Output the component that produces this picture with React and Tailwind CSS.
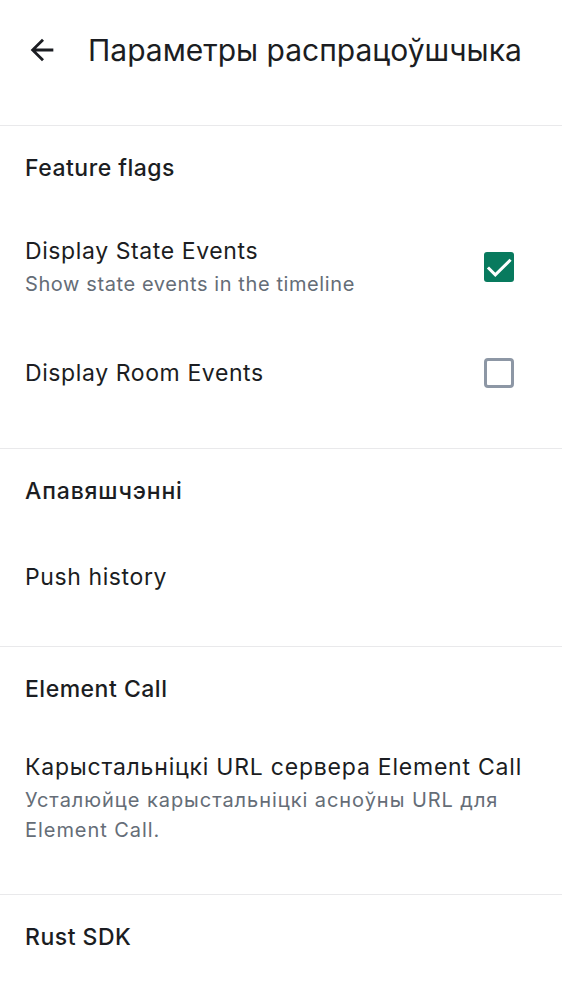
import React from "react";

function Checked() {
  return (
    <div className="w-[30px] h-[30px] rounded-[3px] bg-[#087a5e] flex items-center justify-center">
      <svg width="30" height="30" viewBox="0 0 30 30" fill="none">
        <path d="M5 16.5 L11.3 22.8 L25.5 8.8" stroke="white" strokeWidth="3" strokeLinecap="square" />
      </svg>
    </div>
  );
}

function Unchecked() {
  return <div className="w-[30px] h-[30px] rounded-[4px] border-[3px] border-[#8d97a5] bg-white" />;
}

function SectionHeader({ children, wide }) {
  return (
    <div
      className={
        wide
          ? "pt-[28px] px-[25px] text-[23px] leading-[28px] tracking-[0.85px] font-medium text-[#1b1d22]"
          : "pt-[28px] px-[25px] text-[23px] leading-[28px] tracking-[0.5px] font-medium text-[#1b1d22]"
      }
    >
      {children}
    </div>
  );
}

export default function App() {
  return (
    <div
      className="w-[562px] h-[1000px] bg-white overflow-hidden text-[#1b1d22]"
      style={{ fontFamily: "Inter, Roboto, sans-serif" }}
    >
      <div className="h-[100px] flex items-center px-[25px]">
        <svg width="34" height="34" viewBox="0 0 24 24" fill="#1b1d22">
          <path d="M20 11H7.83l5.59-5.59L12 4l-8 8 8 8 1.41-1.41L7.83 13H20v-2z" />
        </svg>
        <div className="ml-[29px] text-[30px] leading-[36px] text-[#1b1d22]">Параметры распрацоўшчыка</div>
      </div>

      <div className="mt-[25px] border-t border-[#e9e9eb] pb-[59px]">
        <SectionHeader>Feature flags</SectionHeader>
        <div className="mt-[53px] pl-[25px] pr-[48px] flex items-center">
          <div className="flex-1">
            <div className="text-[23px] leading-[32px] tracking-[0.6px]">Display State Events</div>
            <div className="mt-[2px] text-[20px] leading-[30px] tracking-[0.6px] text-[#656d77]">Show state events in the timeline</div>
          </div>
          <Checked />
        </div>
        <div className="mt-[58px] pl-[25px] pr-[48px] flex items-center">
          <div className="flex-1 text-[23px] leading-[32px] tracking-[0.6px]">Display Room Events</div>
          <Unchecked />
        </div>
      </div>

      <div className="border-t border-[#e9e9eb] pb-[53px]">
        <SectionHeader wide>Апавяшчэнні</SectionHeader>
        <div className="mt-[56px] px-[25px] text-[23px] leading-[32px] tracking-[0.6px]">Push history</div>
      </div>

      <div className="border-t border-[#e9e9eb] pb-[49px]">
        <SectionHeader>Element Call</SectionHeader>
        <div className="mt-[48px] px-[25px]">
          <div className="text-[23px] leading-[32px] tracking-[0.78px] whitespace-nowrap">Карыстальніцкі URL сервера Element Call</div>
          <div className="mt-[2px] text-[20px] leading-[30px] tracking-[0.95px] text-[#656d77]">
            Усталюйце карыстальніцкі асноўны URL для Element Call.
          </div>
        </div>
      </div>

      <div className="border-t border-[#e9e9eb]">
        <SectionHeader>Rust SDK</SectionHeader>
      </div>
    </div>
  );
}
